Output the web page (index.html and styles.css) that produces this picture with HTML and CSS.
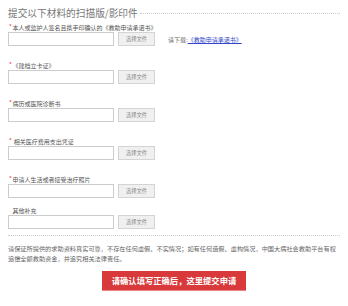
FILE: index.html
```html
<!DOCTYPE html>
<html lang="zh-CN">
<head>
<meta charset="utf-8">
<title>提交材料</title>
<link rel="stylesheet" href="styles.css">
</head>
<body>
<div class="page">
  <div class="title-row">
    <h2 class="title">提交以下材料的扫描版/影印件</h2>
    <div class="title-line"></div>
  </div>

  <div class="group first">
    <div class="label"><span class="req">*</span>本人或监护人签名且携手印确认的《救助申请承诺书》</div>
    <div class="row">
      <input class="field" type="text">
      <button class="pick" type="button">选择文件</button>
      <span class="dl">请下载:<a class="dl-link" href="#">《救助申请承诺书》</a></span>
    </div>
  </div>

  <div class="group">
    <div class="label"><span class="req">*</span>《建档立卡证》</div>
    <div class="row">
      <input class="field" type="text">
      <button class="pick" type="button">选择文件</button>
    </div>
  </div>

  <div class="group">
    <div class="label"><span class="req">*</span>病历或医院诊断书</div>
    <div class="row">
      <input class="field" type="text">
      <button class="pick" type="button">选择文件</button>
    </div>
  </div>

  <div class="group">
    <div class="label"><span class="req">*</span>&nbsp;相关医疗费用支出凭证</div>
    <div class="row">
      <input class="field" type="text">
      <button class="pick" type="button">选择文件</button>
    </div>
  </div>

  <div class="group">
    <div class="label"><span class="req">*</span>申请人生活或者接受治疗照片</div>
    <div class="row">
      <input class="field" type="text">
      <button class="pick" type="button">选择文件</button>
    </div>
  </div>

  <div class="group tight">
    <div class="label"><span class="req blank"></span>其他补充</div>
    <div class="row">
      <input class="field" type="text">
      <button class="pick" type="button">选择文件</button>
    </div>
  </div>

  <div class="divider"></div>

  <p class="notice">请保证所提供的求助资料真实可靠，不存在任何虚假、不实情况；如有任何造假、虚构情况，中国大病社会救助平台有权追偿全额救助资金，并追究相关法律责任。</p>

  <div class="submit-wrap">
    <button class="submit" type="button">请确认填写正确后，这里提交申请</button>
  </div>
</div>
</body>
</html>
```

FILE: styles.css
```css
html, body {
  margin: 0;
  padding: 0;
  background: #fff;
}

.page {
  padding: 7px 8px 0;
  font-family: "Noto Sans CJK SC", "Noto Sans", sans-serif;
  color: #555;
}

.title-row {
  display: flex;
  align-items: center;
  height: 12px;
}

.title {
  margin: 0;
  font-size: 9.7px;
  line-height: 12px;
  font-weight: normal;
  color: #777;
  white-space: nowrap;
}

.title-line {
  flex: 1;
  margin-left: 2px;
  border-top: 1px dotted #ccc;
}

.group {
  margin-top: 16px;
}

.group.first {
  margin-top: 5px;
}

.group.tight {
  margin-top: 9px;
}

.label {
  display: flex;
  align-items: center;
  height: 8px;
  font-size: 6px;
  line-height: 8px;
  color: #555;
  white-space: nowrap;
}

.req {
  display: inline-block;
  width: 3px;
  margin-left: 1px;
  margin-right: 0.5px;
  color: #e4393c;
  font-size: 6px;
  line-height: 6px;
  position: relative;
  top: -1px;
}

.row {
  display: flex;
  align-items: center;
  height: 14px;
}

.field {
  box-sizing: border-box;
  width: 106px;
  height: 14px;
  margin: 0;
  padding: 0;
  border: 1px solid #ccc;
  background: #fff;
}

.pick {
  box-sizing: border-box;
  width: 37px;
  height: 14px;
  margin: 0 0 0 4px;
  padding: 0;
  border: 1px solid #d4d4d4;
  background: #f0f0f0;
  color: #888;
  font-family: "Noto Sans CJK SC", sans-serif;
  font-size: 5.3px;
  line-height: 12px;
}

.dl {
  margin-left: 13px;
  font-size: 6px;
  color: #666;
  white-space: nowrap;
}

.dl-link {
  color: #3344cc;
  text-decoration: underline;
}

.divider {
  margin-top: 6px;
  border-top: 1px dotted #ccc;
}

.notice {
  margin: 8px 0 0;
  font-size: 6.2px;
  line-height: 10px;
  color: #666;
}

.submit-wrap {
  display: flex;
  justify-content: center;
  margin-top: 7px;
}

.submit {
  width: 144px;
  height: 20px;
  margin: 0;
  padding: 0;
  border: none;
  border-bottom: 1px solid #f08080;
  background: #d8393a;
  color: #fff;
  font-family: "Noto Sans CJK SC", sans-serif;
  font-size: 8.3px;
  font-weight: bold;
  line-height: 19px;
}
```
